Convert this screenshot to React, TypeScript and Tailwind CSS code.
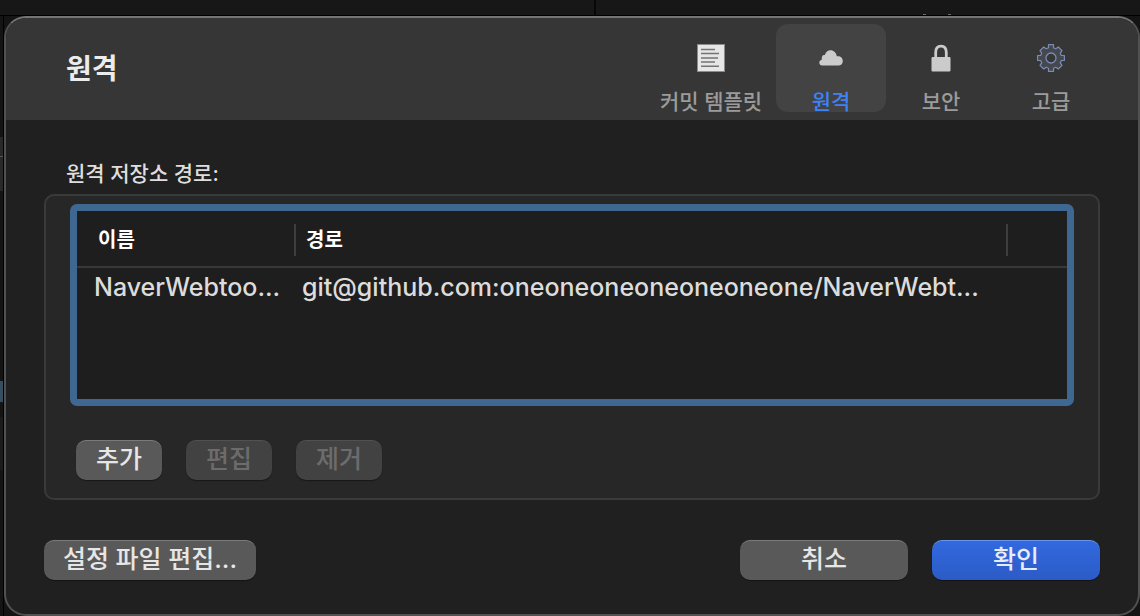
import { useState } from "react";

const remotes = [
  {
    name: "NaverWebtoo...",
    url: "git@github.com:oneoneoneoneoneoneone/NaverWebt...",
  },
];

const tabs = [
  { id: "template", label: "커밋 템플릿", width: "w-[130px]", Icon: TemplateIcon },
  { id: "remote", label: "원격", width: "w-[110px]", Icon: CloudIcon },
  { id: "security", label: "보안", width: "w-[110px]", Icon: LockIcon },
  { id: "advanced", label: "고급", width: "w-[110px]", Icon: GearIcon },
];

function TemplateIcon() {
  return (
    <svg width="28" height="28" viewBox="0 0 28 28">
      <rect x="0.5" y="0.5" width="27" height="27" fill="#e6e6e6" stroke="#8c8c8c" />
      <path
        d="M4 5.5h14M4 9.5h18M4 14h17M4 18h14M4 22.3h18"
        stroke="#747474"
        strokeWidth="1.5"
      />
    </svg>
  );
}

function CloudIcon() {
  return (
    <svg width="28" height="28" viewBox="0 0 28 28">
      <path
        d="M5.3 21.6C3.4 21.6 2.3 20.4 2.3 18.8C2.3 17.2 3.2 16.2 4.8 15.8C4.5 11.5 6.3 10.6 7.8 11C8.8 7.8 10.8 6.2 13.5 6.2C16.8 6.2 19.2 8.6 19.8 12.2C23.4 11.7 25.8 13.9 25.8 16.9C25.8 19.7 23.7 21.6 21 21.6Z"
        fill="#cbcbcb"
      />
    </svg>
  );
}

function LockIcon() {
  return (
    <svg width="28" height="28" viewBox="0 0 28 28">
      <rect x="4.5" y="13" width="19" height="14.5" rx="1" fill="#cbcbcb" />
      <path
        d="M8.7 14V8.5C8.7 4.5 10.7 2.2 14 2.2C17.3 2.2 19.3 4.5 19.3 8.5V14"
        fill="none"
        stroke="#cbcbcb"
        strokeWidth="2.8"
      />
    </svg>
  );
}

function GearIcon() {
  return (
    <svg width="28" height="28" viewBox="0 0 28 28">
      <path
        d="M11.5 0.6H16.5V3.7L18.8 4.7L21.3 3L25 6.7L23.3 9.2L24.3 11.5H27.4V16.5H24.3L23.3 18.8L25 21.3L21.3 25L18.8 23.3L16.5 24.3V27.4H11.5V24.3L9.2 23.3L6.7 25L3 21.3L4.7 18.8L3.7 16.5H0.6V11.5H3.7L4.7 9.2L3 6.7L6.7 3L9.2 4.7L11.5 3.7Z"
        fill="#45484f"
        stroke="#7b8cb4"
        strokeWidth="1.2"
        strokeLinejoin="round"
      />
      <circle cx="14" cy="14" r="5" fill="#363636" stroke="#7b8cb4" strokeWidth="1.3" />
    </svg>
  );
}

const buttonBase =
  "flex h-10 items-center justify-center rounded-[10px] border-t pb-1 text-[25px] leading-9 font-medium shadow-[0_1px_1px_rgba(0,0,0,0.4)]";
const grayButton = `${buttonBase} border-[#7a7a7a] bg-[#595959] text-[#e6e6e6]`;
const smallButton = `${grayButton} w-[86px] disabled:border-[#515151] disabled:bg-[#424242] disabled:text-[#6c6c6c]`;
const blueButton = `${buttonBase} border-[#6a94ea] bg-linear-to-b from-[#3269df] to-[#2b5bc6] text-[#e6ecfa]`;

export default function App() {
  const [active, setActive] = useState("remote");

  return (
    <div className="flex min-h-screen flex-col bg-[#141414] font-[Inter,'Noto_Sans_CJK_KR',sans-serif]">
      <div className="flex h-4 border-b border-black bg-[#171717]">
        <div className="w-[596px] border-r-2 border-[#080808]" />
        <div className="flex items-end gap-[22px] pl-[327px]">
          <span className="h-px w-[3px] bg-[#6a6a6a]" />
          <span className="h-px w-[3px] bg-[#6a6a6a]" />
        </div>
      </div>

      <div className="flex flex-1">
        {/* window behind the sheet */}
        <div className="flex w-1 flex-col border-r border-black pt-[121px]">
          <div className="h-[54px] bg-[#292929] pt-[19px]">
            <div className="h-px bg-[#555555]" />
          </div>
          <div className="mt-[190px] h-[21px] bg-[#364f60]" />
          <div className="mt-[15px] h-[53px] bg-[#1b1b1b]" />
        </div>

        <main className="flex flex-1 flex-col overflow-hidden rounded-[22px] border-2 border-[#515151] border-t-[#757575] bg-[#202020]">
          <header className="flex h-[102px] items-start justify-between bg-[#363636] pr-8 pl-[60px]">
            <h1 className="pt-[30px] text-[28px] leading-[42px] font-bold text-[#ececec]">원격</h1>
            <nav className="flex pt-1.5">
              {tabs.map(({ id, label, width, Icon }) => (
                <button
                  key={id}
                  type="button"
                  onClick={() => setActive(id)}
                  className={`flex h-[88px] flex-col items-center rounded-xl pt-5 ${width} ${
                    active === id ? "bg-[#434343] text-[#3e82f7]" : "text-[#9b9b9b]"
                  }`}
                >
                  <Icon />
                  <span className="mt-5 text-[21px] leading-5 font-medium whitespace-nowrap">
                    {label}
                  </span>
                </button>
              ))}
            </nav>
          </header>

          <div className="flex flex-1 flex-col px-[38px] pt-[38px]">
            <h2 className="pl-[22px] text-[21px] leading-8 font-medium text-[#dedede]">
              원격 저장소 경로:
            </h2>

            <section className="mt-1 rounded-[10px] border-2 border-[#3a3a3a] bg-[#272727] px-6 pt-2 pb-[18px]">
              <div className="h-[202px] rounded-[7px] border-[7px] border-[#3e6891] bg-[#1e1e1e]">
                <table className="w-full table-fixed border-separate border-spacing-0 text-left">
                  <thead>
                    <tr className="text-[20px] text-white">
                      <th className="w-[219px] border-b-2 border-[#383838] p-0 pt-[13px] pb-2.5 pl-[21px] font-semibold">
                        <div className="flex h-8 items-center border-r-2 border-[#3d3d3d]">이름</div>
                      </th>
                      <th className="border-b-2 border-[#383838] p-0 pt-[13px] pb-2.5 pl-2.5 font-semibold">
                        <div className="flex h-8 items-center border-r-2 border-[#3d3d3d]">경로</div>
                      </th>
                      <th className="w-[59px] border-b-2 border-[#383838] p-0" />
                    </tr>
                  </thead>
                  <tbody>
                    {remotes.map((remote) => (
                      <tr key={remote.name} className="h-10 text-[25px] font-medium text-[#dcdcdc]">
                        <td className="p-0 pl-[17px] whitespace-nowrap">{remote.name}</td>
                        <td className="p-0 pl-1.5 whitespace-nowrap">{remote.url}</td>
                        <td />
                      </tr>
                    ))}
                  </tbody>
                </table>
              </div>

              <div className="mt-[34px] flex gap-6 pl-1.5">
                <button type="button" className={smallButton}>추가</button>
                <button type="button" disabled className={smallButton}>편집</button>
                <button type="button" disabled className={smallButton}>제거</button>
              </div>
            </section>

            <footer className="mt-10 flex gap-6 pb-[34px]">
              <button type="button" className={`${grayButton} mr-auto w-[212px]`}>
                설정 파일 편집...
              </button>
              <button type="button" className={`${grayButton} w-[168px]`}>취소</button>
              <button type="button" className={`${blueButton} w-[168px]`}>확인</button>
            </footer>
          </div>
        </main>
      </div>
    </div>
  );
}
